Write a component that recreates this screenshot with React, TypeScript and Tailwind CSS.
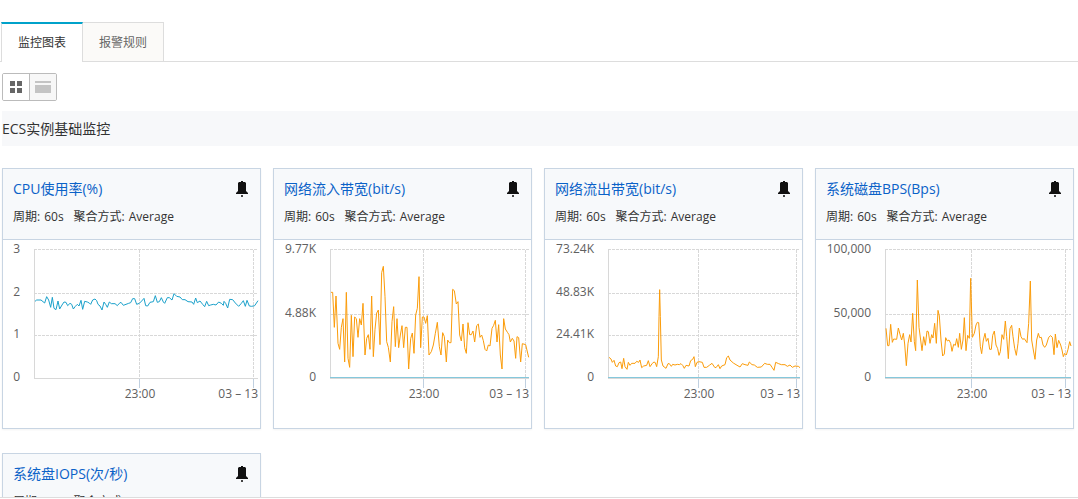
import React from 'react';

interface Tick {
  label: string;
  y: number;
}

interface Metric {
  title: string;
  color: string;
  left: number;
  hours: number[];
  ticks: Tick[];
  // 采样点坐标为 1/3 像素精度，shift 为左侧偏移
  shift: number;
  points: string;
  baseline?: boolean;
}

const METRICS: Metric[] = [
  {
    title: 'CPU使用率(%)',
    color: '#1ba1cb',
    left: 31,
    hours: [136, 250],
    ticks: [{ label: '3', y: 9 }, { label: '2', y: 53 }, { label: '1', y: 95 }, { label: '0', y: 138 }],
    shift: 3,
    points:
      '105,184 110,180 123,180 134,189 140,170 146,180 152,202 157,172 162,205 168,209 174,183 179,207 186,195 192,186 198,187 203,197 210,190 215,193 220,207 226,199 232,193 237,198 243,181 248,208 254,184 262,186 268,189 272,193 278,180 285,177 290,182 294,193 300,198 306,210 312,186 317,193 322,202 328,186 334,191 345,191 352,197 358,190 363,187 370,196 378,193 386,190 392,188 398,176 404,176 410,193 418,190 425,183 432,175 437,197 443,198 450,187 460,185 466,167 472,187 478,185 484,173 490,186 494,190 502,173 508,173 516,180 522,161 530,169 540,171 547,179 555,179 564,185 576,186 581,193 587,174 592,188 600,183 608,193 614,200 620,184 626,197 632,195 640,193 648,195 656,186 664,190 670,196 672,184 677,190 683,204 689,178 698,179 706,189 716,199 724,190 730,182 736,199 741,181 748,198 755,199 764,197 774,182',
  },
  {
    title: '网络流入带宽(bit/s)',
    color: '#fb9c0a',
    left: 56,
    hours: [149, 251],
    ticks: [{ label: '9.77K', y: 9 }, { label: '4.88K', y: 74 }, { label: '0', y: 138 }],
    shift: 4,
    baseline: true,
    points:
      '183,157 188,157 193,262 198,168 204,310 209,328 214,262 219,236 224,366 229,157 234,355 239,382 244,226 249,350 254,231 259,236 264,292 269,236 274,255 279,190 285,345 290,295 295,284 300,328 305,168 310,350 315,268 320,219 325,210 330,314 335,98 340,79 345,170 350,305 355,322 361,366 366,245 371,200 376,320 381,236 386,323 391,285 396,257 401,323 406,262 411,262 416,387 422,296 427,279 432,340 437,225 442,205 447,110 452,323 457,231 462,231 467,250 472,227 477,345 484,335 490,315 496,280 502,247 508,320 513,345 518,278 523,290 529,366 533,300 538,308 543,308 548,148 553,152 559,192 564,185 569,285 574,303 579,252 584,323 589,340 594,248 599,284 604,284 609,273 614,306 620,257 625,252 630,292 635,285 640,302 645,328 650,333 655,315 660,318 666,265 671,256 676,241 681,306 686,254 691,345 696,387 701,236 706,267 713,278 717,284 721,306 727,295 732,303 737,355 741,290 746,293 752,366 757,311 767,314 776,352',
  },
  {
    title: '网络流出带宽(bit/s)',
    color: '#fb9c0a',
    left: 63,
    hours: [153, 251],
    ticks: [{ label: '73.24K', y: 9 }, { label: '48.83K', y: 53 }, { label: '24.41K', y: 95 }, { label: '0', y: 138 }],
    shift: 5,
    baseline: true,
    points:
      '207,352 213,357 217,367 222,361 227,378 232,380 237,368 242,366 246,386 251,355 255,380 261,388 265,367 270,376 275,370 285,370 290,364 296,367 300,360 305,383 311,378 320,376 325,362 330,380 337,370 342,366 346,368 350,380 355,350 357,230 359,149 361,230 364,360 369,378 378,385 384,371 388,371 394,379 398,373 405,375 412,373 418,374 423,371 428,376 433,385 438,376 447,378 452,362 458,358 462,350 466,380 471,367 477,365 487,367 492,382 500,382 508,376 516,370 524,382 528,383 535,374 540,386 545,378 555,374 560,353 565,348 570,360 580,369 588,374 600,381 607,371 615,374 624,376 628,366 636,374 643,375 652,382 664,381 674,370 682,373 690,373 696,382 702,391 707,367 716,371 724,374 735,374 742,379 750,375 757,382 765,378 775,379 780,383',
  },
  {
    title: '系统磁盘BPS(Bps)',
    color: '#fb9c0a',
    left: 69,
    hours: [155, 249],
    ticks: [{ label: '100,000', y: 9 }, { label: '50,000', y: 74 }, { label: '0', y: 138 }],
    shift: 8,
    baseline: true,
    points:
      '234,265 239,317 243,317 248,253 253,307 257,297 266,298 271,264 276,283 281,300 286,280 290,312 295,377 300,310 305,284 309,306 314,220 319,305 323,332 328,120 333,262 338,300 342,332 347,290 352,316 357,273 361,275 366,310 371,284 375,294 380,250 385,310 390,211 394,228 399,300 404,348 409,342 413,293 418,303 423,300 428,310 432,334 437,313 442,316 446,296 451,322 455,280 460,328 465,300 469,233 474,332 479,286 484,295 488,115 493,292 499,280 504,255 508,247 512,248 517,320 521,341 526,300 531,280 535,304 540,295 545,328 550,328 554,286 559,273 564,315 569,326 573,346 577,335 582,284 587,298 592,243 596,290 601,356 606,266 611,256 615,290 620,325 625,346 630,310 634,264 639,290 644,298 649,296 657,308 662,250 667,123 671,300 676,330 681,358 686,300 691,280 695,293 700,292 705,315 710,322 715,315 722,292 728,287 733,292 738,344 742,282 747,323 752,301 758,315 762,330 766,350 770,340 775,345 780,328 785,305 789,318',
  },
  {
    title: '系统盘IOPS(次/秒)',
    color: '#fb9c0a',
    left: 31,
    hours: [136, 250],
    ticks: [{ label: '0', y: 138 }],
    shift: 3,
    baseline: true,
    points: '',
  },
];

function BellIcon() {
  return (
    <svg className="block" width="12" height="16" viewBox="0 0 12 16" fill="#111">
      <path d="M5 0h2v1h2l1 1v8l2 2v1H0v-1l2-2V2l1-1h2z" />
      <path d="M5 14h2v2H5z" fill="#444" />
    </svg>
  );
}

function MetricChart({ metric }: { metric: Metric }) {
  const { left, hours, ticks } = metric;
  // 刻度文字均匀分布在纵轴上
  const step = 128 / Math.max(ticks.length - 1, 1);
  return (
    <svg className="block w-full" viewBox="0 0 257 188" fontSize="12" fill="#606060">
      {/* 网格线 */}
      <g fill="none" stroke="#d8d8d8" strokeDasharray="3 1" shapeRendering="crispEdges">
        {ticks.filter((t) => t.y !== 138).map((t) => (
          <path key={t.label} d={`M${left} ${t.y}.5H255`} />
        ))}
        {hours.map((x) => (
          <path key={x} d={`M${x}.5 10V138`} />
        ))}
      </g>

      {/* 坐标轴 */}
      <g fill="none" stroke="#d8d8d8" shapeRendering="crispEdges">
        <path d={`M${left}.5 9V138`} />
        <path d={`M${left} 138.5H255`} />
        {hours.map((x) => (
          <path key={x} d={`M${x}.5 139V148`} stroke="#c0d0e0" />
        ))}
      </g>

      {/* 曲线 */}
      {metric.baseline && <path d={`M${left} 137.5H255`} stroke="#85c8dc" shapeRendering="crispEdges" />}
      <g transform={`translate(${-metric.shift} 0) scale(${1 / 3})`}>
        <polyline points={metric.points} fill="none" stroke={metric.color} strokeWidth="3" strokeLinejoin="round" />
      </g>

      {/* 刻度文字 */}
      {ticks.map((t, i) => (
        <text key={t.label} x={left - 14} y={Math.round(13 + i * step)} textAnchor="end">{t.label}</text>
      ))}
      <text x={hours[0] + 1} y="158" textAnchor="middle">23:00</text>
      <text x="255" y="158" textAnchor="end">03 – 13</text>
    </svg>
  );
}

function MetricCard({ metric }: { metric: Metric }) {
  return (
    <section className="border border-[#c8d5e3] bg-white shadow-xs">
      <header className="h-[71px] border-b border-[#c8d5e3] bg-[#f7f9fb] px-[10px] pt-[10px]">
        <div className="flex items-center justify-between pr-0.5">
          <a href="#" className="text-sm text-[#0b62c8]">{metric.title}</a>
          <button type="button" aria-label="设置报警规则">
            <BellIcon />
          </button>
        </div>
        <dl className="mt-[10px] flex gap-[10px] text-xs text-[#333]">
          <div className="flex gap-1">
            <dt>周期:</dt>
            <dd>60s</dd>
          </div>
          <div className="flex gap-1">
            <dt>聚合方式:</dt>
            <dd>Average</dd>
          </div>
        </dl>
      </header>
      <MetricChart metric={metric} />
    </section>
  );
}

export default function App() {
  return (
    <div className="h-screen bg-white pb-px font-['Open_Sans','Noto_Sans_CJK_SC',sans-serif] text-[#333]">
      <main className="h-full overflow-hidden border-b border-[#ddd] pt-[22px]">
        {/* 标签页 */}
        <nav className="flex h-10 border-b border-[#ddd] pl-px text-xs">
          <button type="button" className="h-10 border-x border-t-2 border-x-[#ddd] border-t-[#00a2ca] bg-white px-4 text-[#333]">
            监控图表
          </button>
          <button type="button" className="border-t border-r border-[#ddd] bg-[#fbfaf8] px-4 pt-0.5 text-[#666]">
            报警规则
          </button>
        </nav>

        {/* 视图切换 */}
        <div className="mt-[11px] ml-0.5 flex h-7 w-[55px] overflow-hidden rounded-xs border border-[#bbb]">
          <button type="button" aria-label="网格视图" className="flex flex-1 items-center justify-center border-r border-[#bbb] bg-white">
            <svg width="12" height="12" viewBox="0 0 12 12" fill="#666">
              <path d="M0 0h5v5H0zM7 0h5v5H7zM0 7h5v5H0zM7 7h5v5H7z" />
            </svg>
          </button>
          <button type="button" aria-label="列表视图" className="flex flex-1 items-center justify-center bg-[#f7f7f7]">
            <svg width="16" height="12" viewBox="0 0 16 12" fill="#c4c4c4">
              <path d="M0 0h16v2H0zM0 4h16v8H0z" />
            </svg>
          </button>
        </div>

        <h2 className="mt-[10px] ml-0.5 h-[35px] bg-[#f7f8fa] text-sm leading-[35px]">ECS实例基础监控</h2>

        <div className="mt-[22px] grid grid-cols-4 gap-x-3 gap-y-6 pr-1 pl-0.5">
          {METRICS.map((metric) => (
            <MetricCard key={metric.title} metric={metric} />
          ))}
        </div>
      </main>
    </div>
  );
}
